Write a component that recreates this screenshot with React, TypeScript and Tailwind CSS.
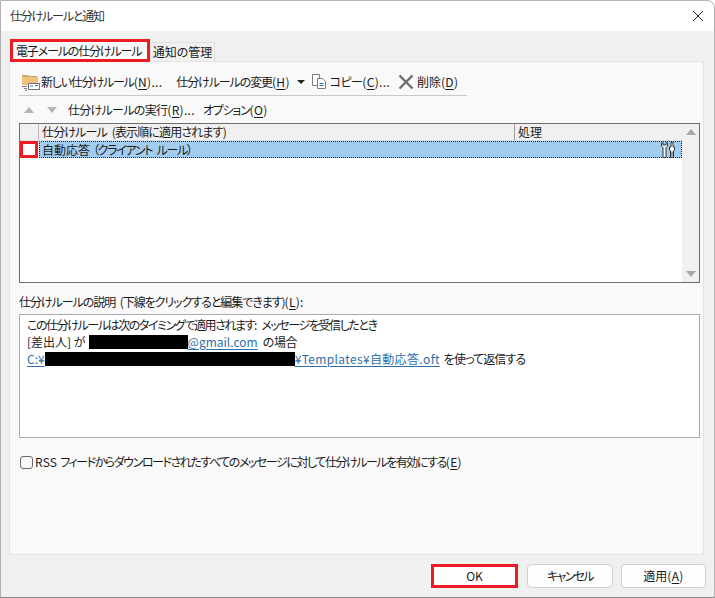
const jp = { fontFamily: '"Noto Sans CJK JP", "Liberation Sans", sans-serif' }

function Key({ k, dots }: { k: string; dots?: boolean }) {
  return <span className="tracking-[0.3px]">(<span className="underline underline-offset-2">{k}</span>){dots ? '...' : ''}</span>
}

function FolderIcon() {
  return (
    <svg width="18" height="18" viewBox="0 0 18 18" className="shrink-0">
      <path d="M0 2h6l1 1h8v2H0z" fill="#c9a86a" />
      <path d="M0 4h16v8H0z" fill="#eec27a" />
      <path d="M6.500 10.500h11v6h-11z" fill="#fff" stroke="#6b7280" />
      <path d="M8 13h3M13 12.500h3" stroke="#3a6ea5" />
      <path d="M0 13.500h5M2 15.500h3M3 17.500h2" stroke="#777" />
    </svg>
  )
}

function CopyIcon() {
  return (
    <svg width="17" height="17" viewBox="0 0 17 17" className="shrink-0" fill="#fff" stroke="#7d7d7d">
      <path d="M1.500 1.500h7v11h-7z" />
      <path d="M6.500 5.500h5l3 3v7h-8z" />
      <path d="M8.500 10.500h4M8.500 12.500h4" stroke="#2f6fa8" />
    </svg>
  )
}

function DeleteIcon() {
  return (
    <svg width="16" height="16" viewBox="0 0 16 16" className="shrink-0">
      <path d="M1.500 1.500l13 13M14.500 1.500l-13 13" stroke="#6e6e6e" strokeWidth="2.400" />
    </svg>
  )
}

function ToolsIcon() {
  return (
    <svg width="14" height="16" viewBox="0 0 14 16" className="shrink-0">
      <path d="M.5 1v3l1.500 1.500v10h3v-10L6.500 4V1L5 .5V3H2V.5z" fill="#fff" stroke="#333" />
      <path d="M10 .5h2V5h1.500v3L12.500 9v6.500h-3V9l-1-1V5H10z" fill="#fff" stroke="#333" />
      <path d="M10.500 9.500h1v5h-1z" fill="#333" />
    </svg>
  )
}

export default function App() {
  return (
    <div style={jp} className="[font-feature-settings:'palt'] w-[715px] h-[598px] flex flex-col overflow-hidden bg-[#f0f0f0] border-t border-t-[#b5b5b5] border-x border-x-[#b0b0b0] border-b border-b-[#8a8a8a] rounded-tr-[8px] text-[12px] text-[#1a1a1a] whitespace-nowrap">
      <div className="h-[30px] shrink-0 bg-white flex items-center justify-between pl-[9px] pr-[10px]">
        <span className="text-[#333] tracking-[-1.2px]">仕分けルールと通知</span>
        <svg width="12" height="12" viewBox="0 0 12 12">
          <path d="M1 1l10 10M11 1L1 11" stroke="#222" strokeWidth="1" />
        </svg>
      </div>

      <div className="flex flex-col flex-1 px-[8px]">
        <div className="h-[30px] shrink-0 flex items-end pl-[1px]">
          <div className="relative h-[22px] w-[140px] bg-[#f9f9f9] flex items-center pl-[6px] z-10 -mb-px tracking-[-1.15px]">
            電子メールの仕分けルール
            <div className="absolute left-0 -top-[1px] w-[140px] h-[23px] border-[3px] border-[#ed1c24]" />
          </div>
          <div className="h-[19px] w-[65px] bg-[#f0f0f0] border border-[#e1e1e1] border-b-0 flex items-center justify-center">
            通知の管理
          </div>
        </div>

        <div className="h-[494px] shrink-0 w-[695px] bg-[#f9f9f9] border border-[#e3e3e3] flex flex-col px-[9px]">
          <div className="h-[34px] shrink-0 w-[448px] border-b border-[#c8c8c8] flex items-center pt-[6px] pl-[3px]">
            <FolderIcon />
            <span className="ml-[1px] tracking-[-1.2px]">新しい仕分けルール<Key k="N" dots /></span>
            <span className="ml-[14px] tracking-[-1.1px]">仕分けルールの変更<Key k="H" /></span>
            <span className="ml-[7px] w-0 h-0 border-x-[4px] border-x-transparent border-t-[4px] border-t-[#222]" />
            <span className="ml-[6px]"><CopyIcon /></span>
            <span className="ml-[2px] tracking-[-0.6px]">コピー<Key k="C" dots /></span>
            <span className="ml-[8px]"><DeleteIcon /></span>
            <span className="ml-[3px]">削除<Key k="D" /></span>
          </div>

          <div className="h-[27px] shrink-0 flex items-center pl-[5px]">
            <span className="w-0 h-0 border-x-[5px] border-x-transparent border-b-[6px] border-b-[#b5b5b5]" />
            <span className="ml-[13px] w-0 h-0 border-x-[5px] border-x-transparent border-t-[6px] border-t-[#b5b5b5]" />
            <span className="ml-[11px] tracking-[-0.7px]">仕分けルールの実行<Key k="R" dots /></span>
            <span className="ml-[8px] tracking-[-1.2px]">オプション<Key k="O" /></span>
          </div>

          <div className="h-[160px] shrink-0 w-[681px] border border-[#6d6d6d] bg-white flex">
            <div className="flex-1 min-w-0 flex flex-col">
              <div className="h-[17px] shrink-0 bg-[#f0f0f0] flex items-center border-b border-[#e0e0e0]">
                <div className="w-[19px] h-full border-r border-[#b8b8b8]" />
                <div className="w-[476px] pl-[3px] border-r border-[#a0a0a0] h-full flex items-center whitespace-pre tracking-[-0.85px] [word-spacing:3px]">仕分けルール (表示順に適用されます)</div>
                <div className="pl-[3px]">処理</div>
              </div>
              <div className="h-[17px] shrink-0 flex">
                <div className="relative w-[19px] h-full bg-white">
                  <div className="absolute left-0 top-0 w-[18px] h-[17px] border-[3px] border-[#ed1c24]" />
                </div>
                <div className="flex-1 bg-[#a3cdee] border border-dotted border-[#222] flex items-center justify-between pl-[2px] pr-[6px]">
                  <span className="tracking-[-1.3px] [word-spacing:3px]"><span className="tracking-[0px]">自動応答</span><span className="ml-[3px]">（クライアント ルール）</span></span>
                  <ToolsIcon />
                </div>
              </div>
            </div>
            <div className="w-[17px] shrink-0 bg-[#f0f0f0] flex flex-col items-center justify-between py-[5px]">
              <span className="w-0 h-0 border-x-[5px] border-x-transparent border-b-[6px] border-b-[#a6a6a6]" />
              <span className="w-0 h-0 border-x-[5px] border-x-transparent border-t-[6px] border-t-[#a6a6a6]" />
            </div>
          </div>

          <div className="mt-[9px] mb-[3px] h-[19px] shrink-0 flex items-center whitespace-pre tracking-[-1.05px] [word-spacing:3px]">
            仕分けルールの説明 (下線をクリックすると編集できます)<Key k="L" />:
          </div>

          <div className="h-[124px] shrink-0 w-[681px] border border-[#a9a9b5] bg-white pl-[7px] pt-[1px] leading-[17px]">
            <div className="tracking-[-1.42px] whitespace-pre [word-spacing:4px]">この仕分けルールは次のタイミングで適用されます: メッセージを受信したとき</div>
            <div className="flex items-center">
              <span className="whitespace-pre">[差出人] が</span>
              <span className="ml-[3px] w-[99px] h-[14px] bg-black" />
              <span className="text-[#2f6fa8] underline underline-offset-2">@gmail.com</span>
              <span className="ml-[5px] tracking-[-0.3px]">の場合</span>
            </div>
            <div className="flex items-center">
              <span className="text-[#2f6fa8] underline underline-offset-2">C:¥</span>
              <span className="w-[250px] h-[14px] bg-black" />
              <span className="text-[#2f6fa8] underline underline-offset-2 tracking-[0.35px]">¥Templates¥自動応答.oft</span>
              <span className="ml-[4px] tracking-[-0.9px]">を使って返信する</span>
            </div>
          </div>

          <div className="mt-[15px] flex items-center">
            <span className="ml-[1px] w-[13px] h-[13px] shrink-0 rounded-[3px] border border-[#6b6b6b] bg-[#f7f7f7]" />
            <span className="ml-[2px] whitespace-pre tracking-[-1.45px]"><span className="tracking-[0.2px]">RSS </span>フィードからダウンロードされたすべてのメッセージに対して仕分けルールを有効にする<Key k="E" /></span>
          </div>
        </div>

        <div className="flex-1 flex items-start justify-end pt-[9px]">
          <div className="relative w-[87px] h-[24px] bg-white flex items-center justify-center">
            OK
            <div className="absolute inset-0 border-[3px] border-[#ed1c24]" />
          </div>
          <div className="ml-[9px] w-[86px] h-[24px] bg-[#fdfdfd] border border-[#d0d0d0] rounded-[4px] flex items-center justify-center tracking-[-1.7px]">キャンセル</div>
          <div className="ml-[8px] w-[85px] h-[24px] bg-[#fdfdfd] border border-[#d0d0d0] rounded-[4px] flex items-center justify-center">適用<Key k="A" /></div>
        </div>
      </div>
    </div>
  )
}
